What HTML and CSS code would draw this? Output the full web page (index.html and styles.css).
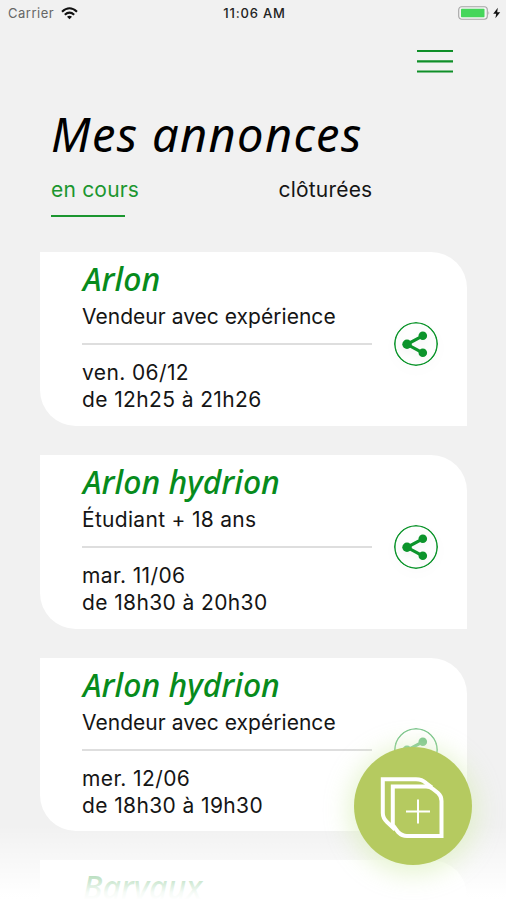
FILE: index.html
```html
<!DOCTYPE html>
<html lang="fr">
<head>
<meta charset="utf-8">
<title>Mes annonces</title>
<link rel="stylesheet" href="styles.css">
</head>
<body>
<svg class="defs" aria-hidden="true">
  <symbol id="share" viewBox="0 0 44 44">
    <circle cx="22" cy="22" r="21.2" fill="none" stroke="currentColor" stroke-width="1.6"/>
    <path d="M28.8 13.8 13 22.3 28.8 30.8" fill="none" stroke="currentColor" stroke-width="3.2"/>
    <circle cx="28.8" cy="13.8" r="4.3" fill="currentColor"/>
    <circle cx="13" cy="22.3" r="4.7" fill="currentColor"/>
    <circle cx="28.8" cy="30.8" r="4.3" fill="currentColor"/>
  </symbol>
</svg>
<div class="screen">
  <header class="status">
    <div class="carrier"><span>Carrier</span>
      <svg width="17" height="13" viewBox="0 0 17 13"><g fill="none" stroke="#111" stroke-width="2.1"><path d="M1 4.7Q8.5-2.2 16 4.7"/><path d="M3.8 7.7Q8.5 3.4 13.2 7.7"/></g><path d="M8.5 12.3 6 9.7Q8.5 7.6 11 9.7Z" fill="#111"/></svg>
    </div>
    <div class="time">11:06 AM</div>
    <svg class="battery" width="43" height="14" viewBox="0 0 43 14"><rect x=".7" y=".7" width="28.6" height="12.6" rx="3" fill="#f5f5f5" stroke="#a5a5a5" stroke-width="1.1"/><rect x="3" y="2.8" width="23.5" height="8.4" rx=".8" fill="#45d65b"/><path d="M30.5 5q1.5 2 0 4Z" fill="#a5a5a5"/><path d="m39.8 1.8-4.6 6h3l-.8 4.5 4.8-6h-3Z" fill="#111"/></svg>
  </header>
  <nav class="nav"><button class="menu" aria-label="Menu"><svg width="36" height="25" viewBox="0 0 36 25" stroke="#0f8f28" stroke-width="2.2"><path d="M0 2H36M0 12.3H36M0 22.5H36"/></svg></button></nav>
  <h1 class="heading">Mes annonces</h1>
  <div class="tabs"><div class="tab active">en cours</div><div class="tab">clôturées</div></div>
  <main class="cards">
    <article class="card">
      <div class="body"><h2>Arlon</h2><p class="job">Vendeur avec expérience</p><p class="when">ven. 06/12<br>de 12h25 à 21h26</p></div>
      <svg class="share"><use href="#share"/></svg>
    </article>
    <article class="card">
      <div class="body"><h2>Arlon hydrion</h2><p class="job wide">Étudiant + 18 ans</p><p class="when">mar. 11/06<br>de 18h30 à 20h30</p></div>
      <svg class="share"><use href="#share"/></svg>
    </article>
    <article class="card">
      <div class="body"><h2>Arlon hydrion</h2><p class="job">Vendeur avec expérience</p><p class="when">mer. 12/06<br>de 18h30 à 19h30</p></div>
      <svg class="share faded"><use href="#share"/></svg>
    </article>
    <article class="card">
      <div class="body"><h2>Barvaux</h2></div>
    </article>
  </main>
  <div class="fade"></div>
  <button class="add" aria-label="Ajouter">
    <svg width="118" height="118" viewBox="0 0 118 118" fill="none" stroke="#fff"><path d="M41 82.5 33 75Q28.8 71 28.8 66V32.2H62Q68 32.2 72 36L78 40.5" stroke-width="4"/><path d="M38.8 39.5H72Q76 39.5 79 42L84 46Q87.5 49 87.5 54V89H53Q48 89 44 85L38.8 78Z" stroke-width="4"/><path d="M52 64.5H76M64 52.5V76.5" stroke-width="2"/></svg>
  </button>
</div>
</body>
</html>
```
FILE: styles.css
```css
* { box-sizing: border-box; }
body { margin: 0; font-family: Inter, "Liberation Sans", sans-serif; color: #151515; }
h1, h2, p { margin: 0; }
button { border: 0; padding: 0; background: none; }
.defs { position: absolute; width: 0; height: 0; }
.screen { position: relative; width: 506px; height: 900px; overflow: hidden; background: #f1f1f1; }
.status { display: grid; grid-template-columns: 1fr auto 1fr; align-items: center; height: 26px; padding: 0 5px 0 8px; font-size: 13px; }
.carrier { display: flex; align-items: center; gap: 7px; color: #666; letter-spacing: .5px; }
.time { font-weight: 500; letter-spacing: .8px; color: #222; }
.battery { justify-self: end; }
.nav { display: flex; justify-content: flex-end; height: 76px; padding: 23px 53px 0 0; }
.menu { width: 36px; height: 25px; }
.menu svg { display: block; }
.heading { height: 73px; padding-left: 51px; font: italic 400 47px/64px "Noto Sans", sans-serif; letter-spacing: 1.35px; color: #000; white-space: nowrap; }
.tabs { display: flex; height: 77px; padding-left: 51px; font-size: 21px; line-height: 30px; }
.tab { width: 228px; letter-spacing: .2px; }
.active { color: #1b962f; }
.active::after { content: ""; display: block; width: 74px; height: 2px; margin-top: 10px; background: #1b962f; }
.cards { display: flex; flex-direction: column; gap: 29px; padding: 0 39px 0 40px; }
.card { display: flex; flex: none; height: 173.8px; padding: 0 29px 0 42px; background: #fff; border-radius: 0 36px 0 36px; }
.body { width: 290px; }
.card h2 { height: 51px; padding-left: 1px; font: italic 500 32px/53px "Noto Sans", sans-serif; color: #078b1c; white-space: nowrap; }
.job { height: 42px; border-bottom: 2px solid #dedede; font-size: 21px; line-height: 27px; letter-spacing: .03px; }
.wide { letter-spacing: .3px; }
.when { padding-top: 14px; font-size: 21px; line-height: 27px; letter-spacing: .38px; }
.share { width: 44px; height: 44px; margin: 70px 0 0 auto; color: #0c942b; border-radius: 50%; filter: drop-shadow(0 4px 4px #0000000d); }
.faded { opacity: .55; }
.fade { position: absolute; inset: auto 0 0; height: 75px; background: linear-gradient(#fff0, #fffffff5 90%, #fff); }
.add { position: absolute; left: 354px; top: 747px; width: 118px; height: 118px; border-radius: 50%; background: #b5ca60; box-shadow: 0 4px 26px 4px #d9eeb8b3; }
```
